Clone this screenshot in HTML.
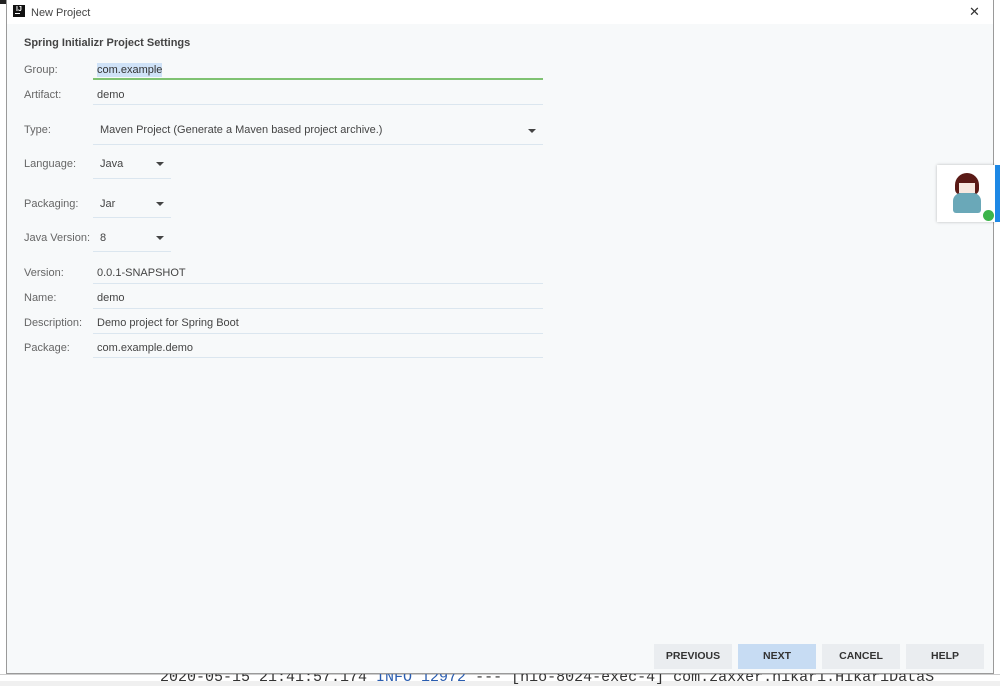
<!DOCTYPE html>
<html><head><style>
*{margin:0;padding:0;box-sizing:border-box}
body{width:1000px;height:681px;overflow:hidden;background:#f0f0f0;font-family:"Liberation Sans","Noto Sans CJK SC",sans-serif;position:relative}
.dlg{position:absolute;left:6px;top:0;width:988px;height:674px;background:#f7f9fa;border:1px solid #9a9a9a;border-top:none}
.title{position:absolute;left:0;top:0;width:100%;height:24px;background:#fff}
.t{position:absolute;font-size:11px;white-space:nowrap;line-height:14px}
.l{color:#666}
.v{color:#444}
.u{position:absolute;height:1px;background:#dbe6ef}
.arr{position:absolute;width:0;height:0;border-left:4px solid transparent;border-right:4px solid transparent;border-top:4px solid #444}
.btn{position:absolute;top:644px;width:78px;height:25px;background:#eaedf0;font-size:10.5px;font-weight:bold;color:#333;text-align:center;line-height:25px}
</style></head><body>
<div style="position:absolute;left:0;top:0;width:7px;height:681px;background:#fff"></div>
<div style="position:absolute;left:0;top:0;width:7px;height:4px;background:#222"></div>
<div style="position:absolute;left:0;top:674px;width:1000px;height:7px;background:#fff;border-top:1px solid #ccc"></div>
<div class="t" style="left:160px;top:671px;font-family:'Liberation Mono',monospace;font-size:15px;color:#333">2020-05-15 21:41:57.174  <span style="color:#2a5db0">INFO 12972</span> --- [nio-8024-exec-4] com.zaxxer.hikari.HikariDataS</div>
<div style="position:absolute;left:994px;top:0;width:6px;height:674px;background:#fff"></div>
<div class="dlg">
<div class="title"></div>
<div style="position:absolute;left:6px;top:5px;width:12px;height:12px;background:#111"><div style="position:absolute;left:2px;top:8px;width:5px;height:1px;background:#fff"></div><div style="position:absolute;left:3px;top:1px;font-size:7px;color:#fff;font-weight:bold;line-height:7px">IJ</div></div>
<div class="t" style="left:24px;top:6px;color:#444">New Project</div>
<div class="t" style="left:962px;top:5px;font-size:13px;color:#333">✕</div>
<div class="t" style="left:17px;top:36px;font-weight:bold;color:#444">Spring Initializr Project Settings</div>

<div class="t l" style="left:17px;top:63px">Group:</div>
<div class="t" style="left:90px;top:63px;color:#333;background:#cfe2f7">com.example</div>
<div class="u" style="left:86px;top:78px;width:450px;height:2px;background:#7fc272"></div>

<div class="t l" style="left:17px;top:88px">Artifact:</div>
<div class="t v" style="left:90px;top:88px">demo</div>
<div class="u" style="left:86px;top:104px;width:450px"></div>

<div class="t l" style="left:17px;top:123px">Type:</div>
<div class="t v" style="left:93px;top:123px">Maven Project (Generate a Maven based project archive.)</div>
<div class="arr" style="left:521px;top:129px"></div>
<div class="u" style="left:86px;top:144px;width:450px"></div>

<div class="t l" style="left:17px;top:157px">Language:</div>
<div class="t v" style="left:93px;top:157px">Java</div>
<div class="arr" style="left:149px;top:162px"></div>
<div class="u" style="left:86px;top:178px;width:78px"></div>

<div class="t l" style="left:17px;top:197px">Packaging:</div>
<div class="t v" style="left:93px;top:197px">Jar</div>
<div class="arr" style="left:149px;top:202px"></div>
<div class="u" style="left:86px;top:217px;width:78px"></div>

<div class="t l" style="left:17px;top:231px">Java Version:</div>
<div class="t v" style="left:93px;top:231px">8</div>
<div class="arr" style="left:149px;top:236px"></div>
<div class="u" style="left:86px;top:251px;width:78px"></div>

<div class="t l" style="left:17px;top:266px">Version:</div>
<div class="t v" style="left:90px;top:266px">0.0.1-SNAPSHOT</div>
<div class="u" style="left:86px;top:283px;width:450px"></div>

<div class="t l" style="left:17px;top:291px">Name:</div>
<div class="t v" style="left:90px;top:291px">demo</div>
<div class="u" style="left:86px;top:308px;width:450px"></div>

<div class="t l" style="left:17px;top:316px">Description:</div>
<div class="t v" style="left:90px;top:316px">Demo project for Spring Boot</div>
<div class="u" style="left:86px;top:333px;width:450px"></div>

<div class="t l" style="left:17px;top:341px">Package:</div>
<div class="t v" style="left:90px;top:341px">com.example.demo</div>
<div class="u" style="left:86px;top:357px;width:450px"></div>

<div class="btn" style="left:647px">PREVIOUS</div>
<div class="btn" style="left:731px;background:#c7dcf3">NEXT</div>
<div class="btn" style="left:815px">CANCEL</div>
<div class="btn" style="left:899px">HELP</div>
</div>
<div style="position:absolute;left:937px;top:165px;width:58px;height:57px;background:#fff;box-shadow:0 0 3px rgba(0,0,0,.25)">
<div style="position:absolute;left:18px;top:8px;width:24px;height:22px;background:#5a1a16;border-radius:12px 12px 6px 6px"></div>
<div style="position:absolute;left:22px;top:18px;width:16px;height:10px;background:#f6e8e0"></div>
<div style="position:absolute;left:16px;top:28px;width:28px;height:20px;background:#6aa8b8;border-radius:8px 8px 3px 3px"></div>
<div style="position:absolute;left:46px;top:45px;width:11px;height:11px;background:#3cb44a;border-radius:50%"></div>
</div>
<div style="position:absolute;left:995px;top:165px;width:5px;height:57px;background:#1e88e5"></div>
</body></html>
